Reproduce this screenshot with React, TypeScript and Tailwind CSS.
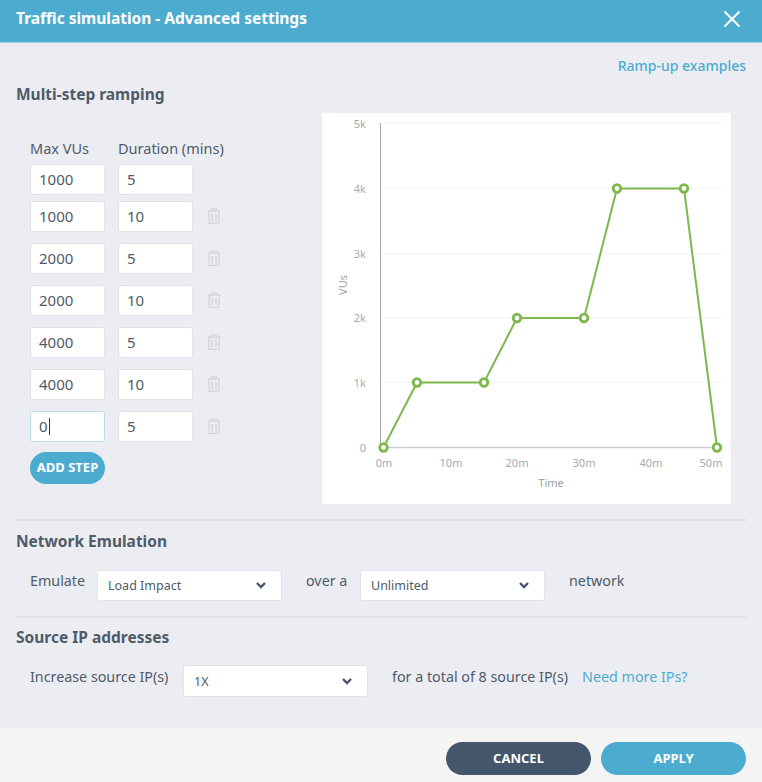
import { X } from 'lucide-react';

const font = "font-['Noto_Sans',sans-serif]";

const steps = [
  { vus: '1000', mins: '5' },
  { vus: '1000', mins: '10' },
  { vus: '2000', mins: '5' },
  { vus: '2000', mins: '10' },
  { vus: '4000', mins: '5' },
  { vus: '4000', mins: '10' },
  { vus: '0', mins: '5' },
];

const points: [number, number][] = [
  [61.5, 334.5],
  [95, 269.5],
  [162, 269.5],
  [195, 205],
  [262, 205],
  [295, 75.5],
  [362, 75.5],
  [395, 334.5],
];

function TrashIcon() {
  return (
    <svg width="14" height="16" viewBox="0 0 14 16" fill="none" stroke="#d3d5d8" strokeWidth="1.3">
      <path d="M0.5 3h13" />
      <path d="M4.5 3V1.2h5V3" />
      <path d="M2 3v11.5a1 1 0 0 0 1 1h8a1 1 0 0 0 1-1V3" />
      <path d="M5 6v7M9 6v7" strokeWidth="1.6" />
    </svg>
  );
}

function Chevron() {
  return (
    <svg width="10" height="7" viewBox="0 0 10 7" fill="none" stroke="#4a5568" strokeWidth="2.4">
      <path d="M1 1l4 4 4-4" />
    </svg>
  );
}

function Field({ value, focused }: { value: string; focused?: boolean }) {
  return (
    <div
      className={`flex h-[31px] w-[75px] items-center rounded-[3px] border bg-white pl-[8px] text-[15px] text-[#4f5b69] ${
        focused ? 'border-[#bcdcea]' : 'border-[#e2e3e7]'
      }`}
    >
      {value}
      {focused && <span className="ml-px h-[17px] w-px bg-[#333]" />}
    </div>
  );
}

function Select({ label, className }: { label: string; className: string }) {
  return (
    <div
      className={`flex w-[185px] items-center justify-between rounded-[3px] border border-[#e2e3e7] bg-white pl-[10px] pr-[15px] text-[12.5px] text-[#4f5b69] ${className}`}
    >
      <span className="pt-0.5">{label}</span>
      <Chevron />
    </div>
  );
}

function Chart() {
  const line = points.map((p) => p.join(',')).join(' ');
  return (
    <div className="h-[391px] w-[409px] bg-white">
      <svg width="409" height="391" className="text-[11px]">
        {[10, 75.5, 140.5, 205, 269.5].map((y) => (
          <line key={y} x1="60" x2="399" y1={y} y2={y} stroke="#f6f6f7" strokeWidth="1.5" />
        ))}
        <line x1="58.5" x2="58.5" y1="10" y2="334.5" stroke="#a9abb0" />
        <line x1="58.5" x2="399" y1="334.5" y2="334.5" stroke="#ccced6" strokeWidth="1.5" />
        {[
          ['5k', 15],
          ['4k', 80],
          ['3k', 145],
          ['2k', 209],
          ['1k', 274],
          ['0', 339],
        ].map(([t, y]) => (
          <text key={t} x="44" y={y} textAnchor="end" fill="#a8aaae">
            {t}
          </text>
        ))}
        {[
          ['0m', 62],
          ['10m', 129],
          ['20m', 195],
          ['30m', 262],
          ['40m', 329],
          ['50m', 389],
        ].map(([t, x]) => (
          <text key={t} x={x} y="354" textAnchor="middle" fill="#a8aaae">
            {t}
          </text>
        ))}
        <text x="229" y="374" textAnchor="middle" fill="#a0a2a7">
          Time
        </text>
        <text transform="translate(25 172) rotate(-90)" textAnchor="middle" fill="#a0a2a7">
          VUs
        </text>
        <polyline points={line} fill="none" stroke="#7db84b" strokeWidth="2" />
        {points.map(([x, y]) => (
          <circle key={x} cx={x} cy={y} r="3.8" fill="#fff" stroke="#7db84b" strokeWidth="2.8" />
        ))}
      </svg>
    </div>
  );
}

export default function App() {
  return (
    <div className={`flex h-[782px] w-[762px] flex-col overflow-hidden bg-[#ecedf2] ${font}`}>
      <header className="flex h-[43px] shrink-0 items-center justify-between border-b border-[#a5d3e6] bg-[#4bacd0] pb-1 pl-4 pr-4">
        <h1 className="text-[15.5px] font-bold text-white">Traffic simulation - Advanced settings</h1>
        <X size={28} strokeWidth={1.6} className="-mt-px text-white" />
      </header>

      <main className="flex-1 px-4">
        <div className="mt-3 text-right text-[14px] font-medium text-[#4bacd0]">Ramp-up examples</div>
        <div className="mt-2 flex justify-between pr-[15px]">
          <div>
            <h2 className="text-[15.5px] font-bold leading-[20px] text-[#4f5b69]">Multi-step ramping</h2>
            <div className="mt-[34px] pl-[14px]">
              <div className="flex gap-[13px] text-[14.5px] leading-[20px] text-[#4f5b69]">
                <span className="w-[75px]">Max VUs</span>
                <span>Duration (mins)</span>
              </div>
              <div className="mt-[6px] flex flex-col gap-[11px]">
                {steps.map((s, i) => (
                  <div key={i} className={`flex items-center gap-[13px] ${i === 0 ? '-mb-[5px]' : ''}`}>
                    <Field value={s.vus} focused={i === steps.length - 1} />
                    <Field value={s.mins} />
                    {i > 0 && (
                      <span className="-mt-[2px] ml-[1px]">
                        <TrashIcon />
                      </span>
                    )}
                  </div>
                ))}
              </div>
              <button className="mt-[10px] h-[32px] w-[75px] rounded-full bg-[#4bacd0] text-[13px] font-bold text-white">
                ADD STEP
              </button>
            </div>
          </div>
          <div className="mt-[29px]">
            <Chart />
          </div>
        </div>

        <div className="mt-[15px] h-[2px] bg-[#dedfe3]" />
        <h2 className="mt-[10px] text-[15.5px] font-bold leading-[20px] text-[#4f5b69]">Network Emulation</h2>
        <div className="mt-[19px] flex pl-[14px] text-[14.3px] text-[#4f5b69]">
          <span className="w-[67px] leading-[22px]">Emulate</span>
          <Select label="Load Impact" className="h-[31px]" />
          <span className="ml-6 w-[54px] leading-[22px]">over a</span>
          <Select label="Unlimited" className="h-[31px]" />
          <span className="ml-6 leading-[22px]">network</span>
        </div>
        <div className="mt-[15px] h-[2px] bg-[#dedfe3]" />
        <h2 className="mt-[9px] text-[15.5px] font-bold leading-[20px] text-[#4f5b69]">Source IP addresses</h2>
        <div className="mt-[18px] flex pl-[14px] text-[14.3px] text-[#4f5b69]">
          <span className="w-[153px] leading-[24px]">Increase source IP(s)</span>
          <Select label="1X" className="h-[32px]" />
          <span className="ml-6 leading-[24px]">for a total of 8 source IP(s)</span>
          <span className="ml-[14px] leading-[24px] text-[#4bacd0]">Need more IPs?</span>
        </div>
      </main>

      <footer className="flex h-[55px] shrink-0 items-start justify-end gap-[10px] bg-[#f4f4f5] pr-4 pt-[15px]">
        <button className="h-[33px] w-[145px] rounded-full bg-[#43566b] text-[13px] font-bold text-white">CANCEL</button>
        <button className="h-[33px] w-[145px] rounded-full bg-[#4bacd0] text-[13px] font-bold text-white">APPLY</button>
      </footer>
    </div>
  );
}
